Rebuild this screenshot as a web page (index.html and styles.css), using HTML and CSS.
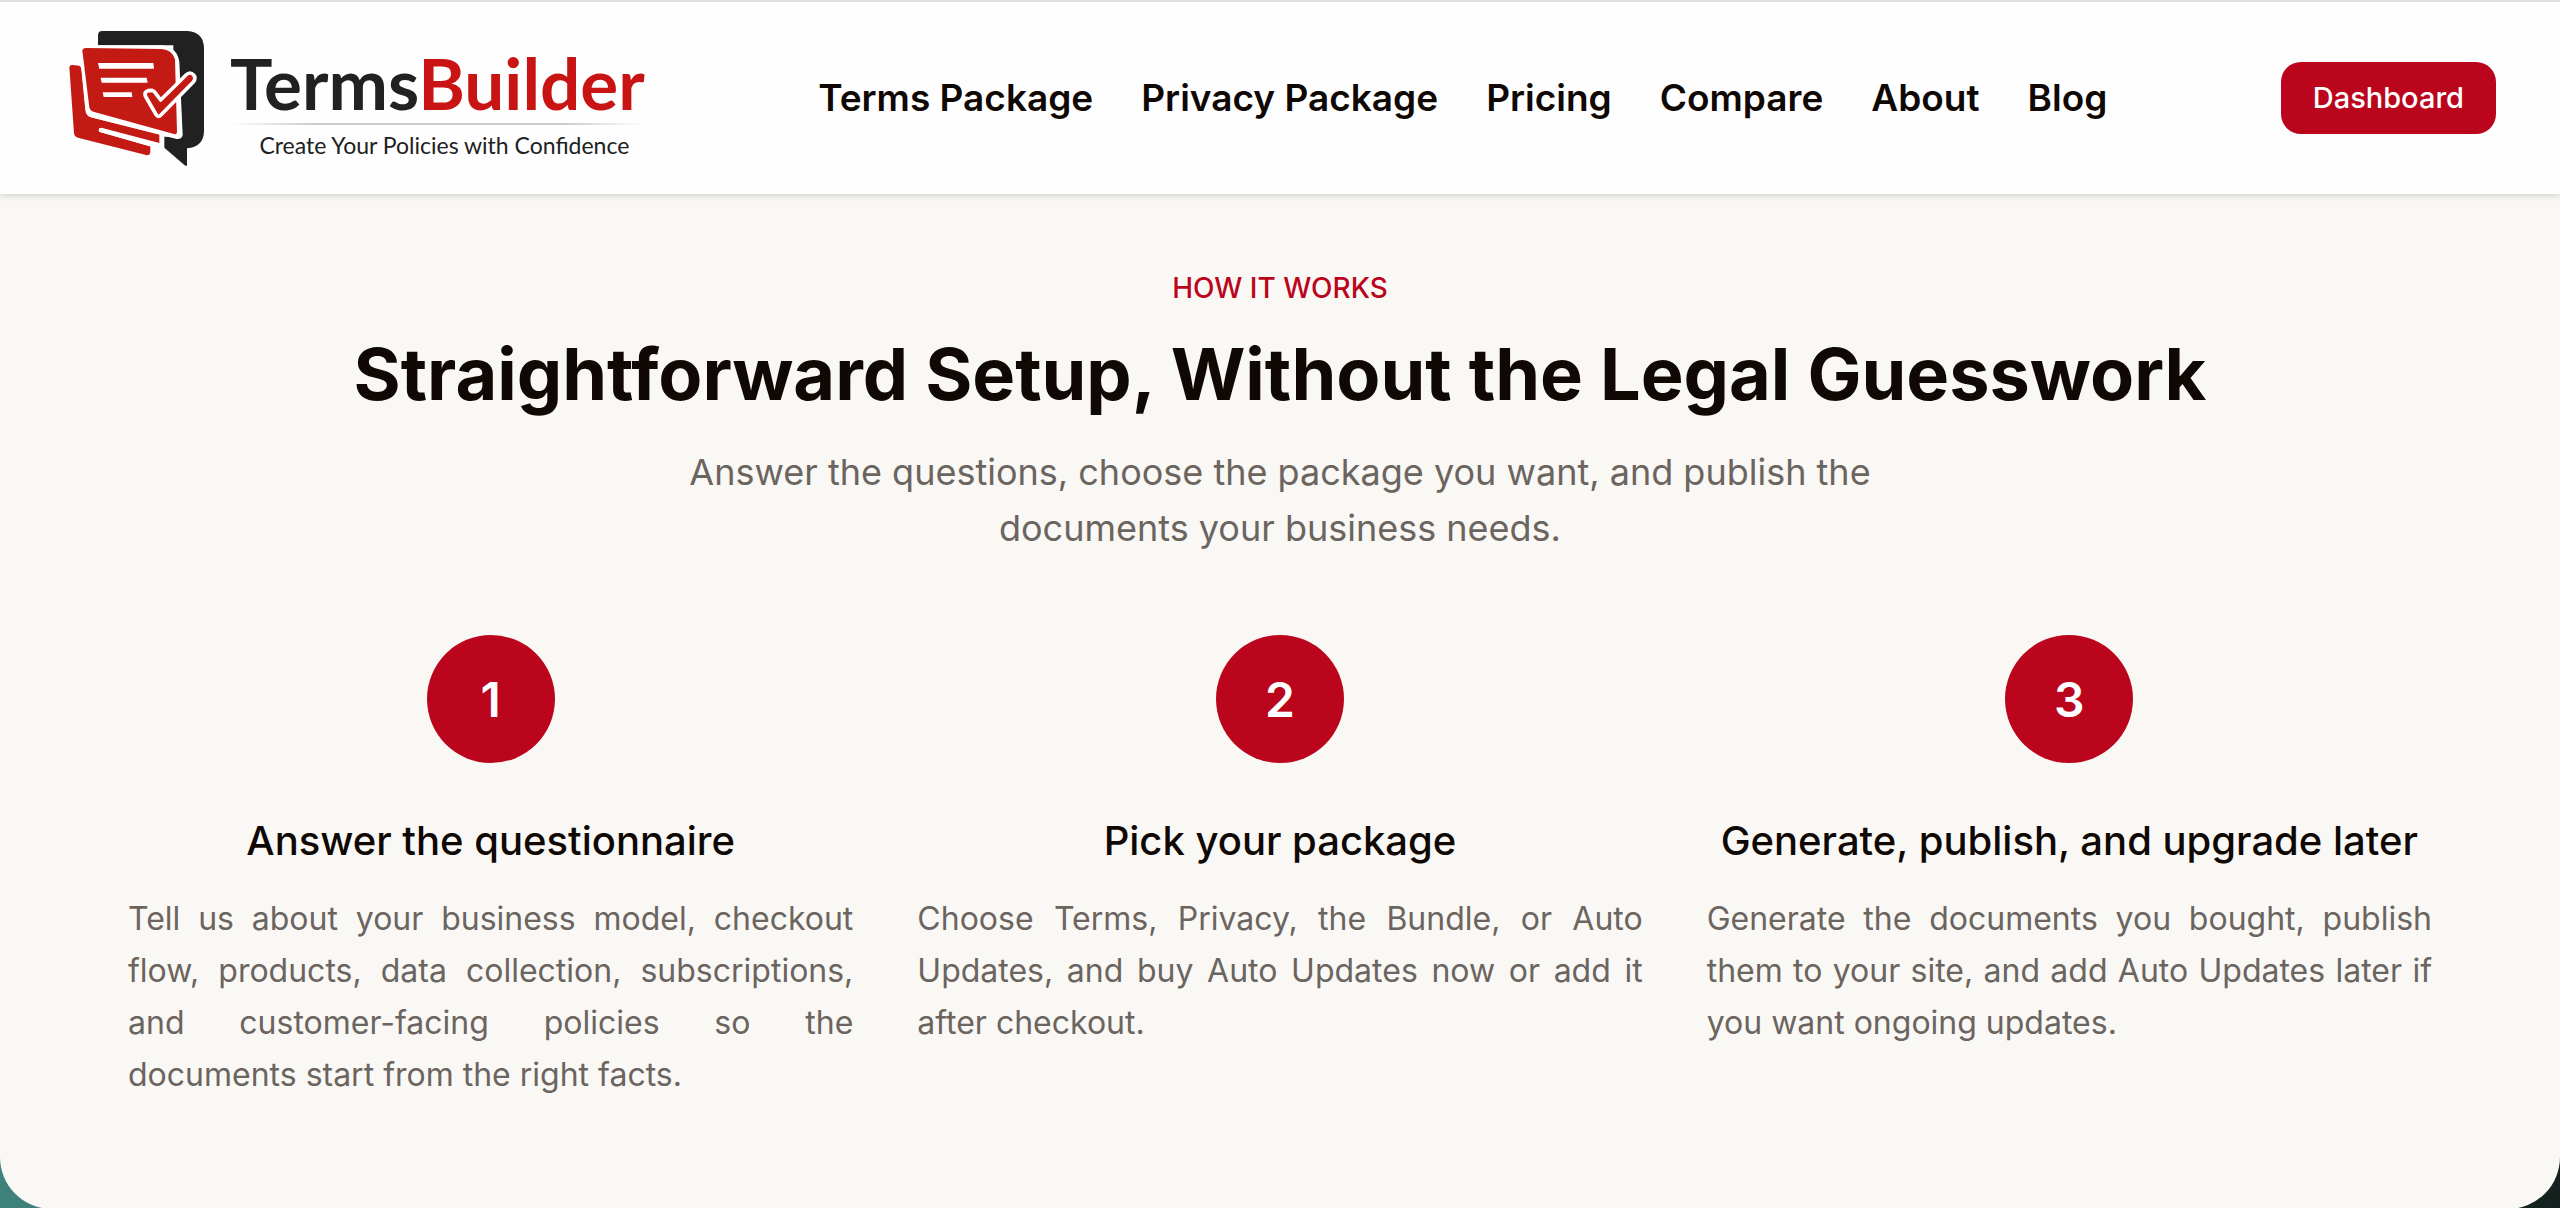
FILE: index.html
```html
<!DOCTYPE html>
<html lang="en">
<head>
    <meta charset="UTF-8">
    <meta name="viewport" content="width=device-width, initial-scale=1.0">
    <title>TermsBuilder</title>
    <link rel="stylesheet" href="styles.css">
</head>
<body>
    <header class="site-header">
        <a class="logo" href="#">
            <svg class="logo-mark" viewBox="12 24 432 420" aria-hidden="true">
                <!-- Speech bubble -->
                <path fill="#202120" d="M114 76V46Q114 33 127 33H382Q432 37 432 86V334Q431 381 381 385V438L374 436L313 383V350H340V76Z"/>
                <!-- Back sheet -->
                <path fill="#c41a14" d="M28 142Q29 134 38 135L58 137Q64 140 65 150L77 270Q79 286 94 292L298 343V369L124 323Q114 324 117 335L271 379V397Q269 408 258 405L54 353Q43 350 42 339Z"/>
                <!-- Front sheet -->
                <path fill="#fff" d="M57 76H305Q352 82 358 126L368 345Q366 358 350 357L92 292Q78 287 76 270Z"/>
                <path fill="#c41a14" d="M67 92Q68 84 78 84L305 87Q336 89 345 118L351 336Q351 344 342 342L100 275Q90 272 88 262Z"/>
                <path fill="#fff" d="M114 129H280L282 146H118ZM122 173H260L263 188H125ZM128 217H215L217 231H131Z"/>
                <!-- Check mark -->
                <path fill="#c41a14" stroke="#fff" stroke-width="11" stroke-linejoin="round" d="M256 228Q252 216 264 212L276 211Q283 213 287 220L302 240L378 165Q390 153 401 165Q409 174 400 186L302 286Q295 293 289 285Z"/>
                <path fill="none" stroke="#fff" stroke-width="12" stroke-linecap="round" d="M122 330L270 373"/>
            </svg>
            <span class="logo-text">
                <span class="logo-name">Terms<span class="logo-accent">Builder</span></span>
                <span class="logo-tagline">Create Your Policies with Confidence</span>
            </span>
        </a>
        <nav class="main-nav">
            <a href="#">Terms Package</a>
            <a href="#">Privacy Package</a>
            <a href="#">Pricing</a>
            <a href="#">Compare</a>
            <a href="#">About</a>
            <a href="#">Blog</a>
        </nav>
        <button class="dashboard-button" type="button">Dashboard</button>
    </header>

    <main>
        <section class="how-it-works">
            <p class="eyebrow">HOW IT WORKS</p>
            <h2>Straightforward Setup, Without the Legal Guesswork</h2>
            <p class="intro">Answer the questions, choose the package you want, and publish the documents your business needs.</p>
            <div class="steps">
                <div class="step">
                    <div class="step-number">1</div>
                    <h3>Answer the questionnaire</h3>
                    <p>Tell us about your business model, checkout flow, products, data collection, subscriptions, and customer-facing policies so the documents&nbsp;start from the right facts.</p>
                </div>
                <div class="step">
                    <div class="step-number">2</div>
                    <h3>Pick your package</h3>
                    <p>Choose Terms, Privacy, the Bundle, or Auto Updates, and buy Auto Updates now or add it after checkout.</p>
                </div>
                <div class="step">
                    <div class="step-number">3</div>
                    <h3>Generate, publish, and upgrade later</h3>
                    <p>Generate the documents you bought, publish them to your site, and add Auto Updates later if you want ongoing updates.</p>
                </div>
            </div>
        </section>
    </main>
</body>
</html>
```
FILE: styles.css
```css
* {
    box-sizing: border-box;
}
body {
    margin: 0;
    font-family: Inter, "Liberation Sans", sans-serif;
    color: #0f0805;
    background: linear-gradient(to right, #3f827b, #14211f);
}
h2,
h3,
p {
    margin: 0;
}
.site-header {
    display: flex;
    align-items: center;
    justify-content: space-between;
    padding: 26px 64px;
    border-top: 2px solid #e0e0e0;
    background-color: #fefefe;
    box-shadow: 0 2px 6px rgba(0, 0, 0, 0.15);
    position: relative;
    z-index: 1;
}
.logo {
    display: flex;
    align-items: center;
    gap: 22px;
    color: #202120;
    text-decoration: none;
}
.logo-mark {
    width: 144px;
    height: 140px;
}
.logo-text {
    display: flex;
    flex-direction: column;
    align-items: center;
    padding-top: 6px;
    font-family: Lato, "Open Sans", sans-serif;
}
.logo-name {
    font-size: 71px;
    font-weight: bold;
    line-height: 80px;
}
.logo-accent {
    color: #c91414;
}
.logo-tagline {
    align-self: stretch;
    padding: 6px 0 0 14px;
    border-top: 2px solid #ddd;
    border-image: linear-gradient(to right, #fff, #ccc 20%, #ccc 80%, #fff) 1;
    font-size: 23px;
    line-height: 28px;
    text-align: center;
}
.main-nav {
    display: flex;
    gap: 48px;
}
.main-nav a {
    color: inherit;
    font-size: 37px;
    font-weight: 600;
    line-height: 48px;
    text-decoration: none;
}
.dashboard-button {
    padding: 18px 32px;
    border: none;
    border-radius: 20px;
    background-color: #bb051d;
    color: #fff;
    font-family: inherit;
    font-size: 29px;
    font-weight: 500;
    line-height: 36px;
    cursor: pointer;
}
.how-it-works {
    padding: 74px 128px 108px;
    border-radius: 0 0 52px 52px;
    background-color: #faf8f4;
    text-align: center;
}
.eyebrow {
    color: #bb051d;
    font-size: 28px;
    font-weight: 500;
    line-height: 40px;
}
h2 {
    margin-top: 18px;
    font-size: 72px;
    font-weight: 700;
    line-height: 96px;
}
.intro {
    max-width: 1200px;
    margin: 22px auto 0;
    color: #6b645f;
    font-size: 36px;
    line-height: 56px;
}
.steps {
    display: grid;
    grid-template-columns: repeat(3, 1fr);
    gap: 64px;
    margin-top: 79px;
}
.step-number {
    display: flex;
    align-items: center;
    justify-content: center;
    width: 128px;
    height: 128px;
    margin: 0 auto;
    border-radius: 50%;
    background-color: #bb051d;
    color: #fff;
    font-size: 48px;
    font-weight: 600;
}
h3 {
    margin-top: 50px;
    font-size: 40px;
    font-weight: 500;
    line-height: 56px;
}
.step p {
    margin-top: 24px;
    color: #6b645f;
    font-size: 32px;
    line-height: 52px;
    text-align: justify;
}
```
